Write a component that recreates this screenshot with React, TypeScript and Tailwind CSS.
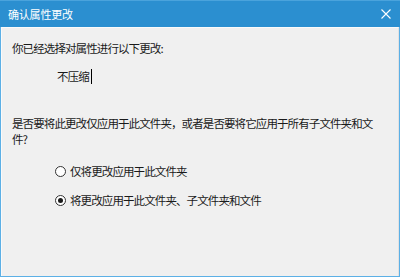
import React from "react";

const font = { fontFamily: '"Noto Sans CJK SC", "Noto Sans", sans-serif' };

export default function App() {
  return (
    <div
      className="w-[400px] h-[277px] flex flex-col bg-[#2b8fd0] text-[11.5px] tracking-[-0.9px] text-[#1a1a1a] overflow-hidden"
      style={font}
    >
      <div className="h-[27px] shrink-0 flex items-center justify-between pl-[8px] pr-[9px] text-white border-t border-[#4aa3dc]">
        <span className="text-[11px] tracking-[-0.2px] leading-none">确认属性更改</span>
        <svg width="10" height="10" viewBox="0 0 10 10">
          <path d="M0.5 0.5 L9.5 9.5 M9.5 0.5 L0.5 9.5" stroke="white" strokeWidth="1.1" />
        </svg>
      </div>
      <div className="flex-1 flex bg-[#5cb0e6] px-px pb-px">
        <div className="flex-1 bg-[#f0f0f0] border-l border-l-[#fafafa] border-r border-r-[#e2e2e2] border-t border-t-[#fafafa] pl-[10px] pt-[12px]">
          <div className="leading-[16px]">你已经选择对属性进行以下更改:</div>
          <div className="mt-[12px] pl-[45px] flex items-center leading-[16px]">
            <span>不压缩</span>
            <span className="ml-[2px] w-px h-[15px] bg-black" />
          </div>
          <div className="mt-[31px] w-[368px] leading-[16px]">
            是否要将此更改仅应用于此文件夹，或者是否要将它应用于所有子文件夹和文件?
          </div>
          <div className="mt-[16px] pl-[43px] flex flex-col gap-[13px]">
            <div className="flex items-center gap-[4px] leading-[16px]">
              <span className="w-[11px] h-[11px] rounded-full border border-[#333] bg-white" />
              <span>仅将更改应用于此文件夹</span>
            </div>
            <div className="flex items-center gap-[4px] leading-[16px]">
              <span className="w-[11px] h-[11px] rounded-full border border-[#333] bg-white flex items-center justify-center">
                <span className="w-[5px] h-[5px] rounded-full bg-[#1a1a1a]" />
              </span>
              <span>将更改应用于此文件夹、子文件夹和文件</span>
            </div>
          </div>
        </div>
      </div>
    </div>
  );
}
